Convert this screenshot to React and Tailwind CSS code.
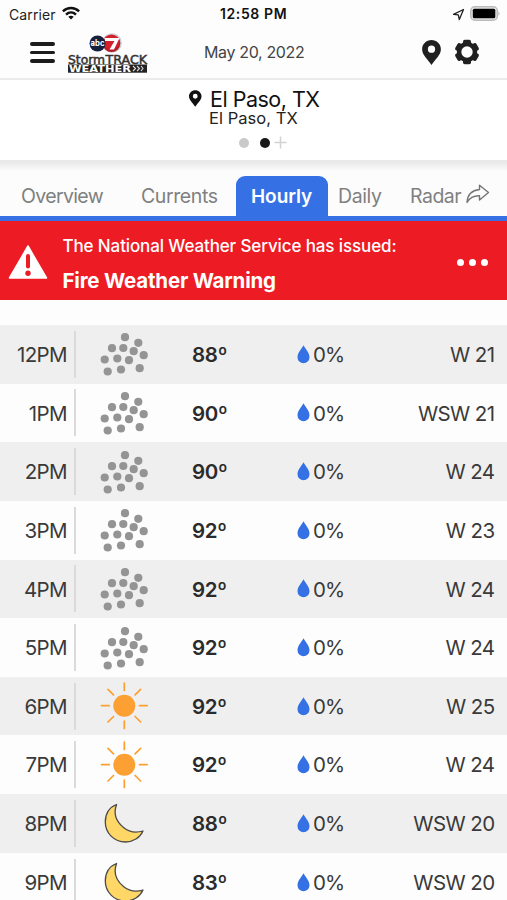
import React from "react";

const hours = [
  { time: "12PM", icon: "dust", temp: "88º", wind: "W 21" },
  { time: "1PM", icon: "dust", temp: "90º", wind: "WSW 21" },
  { time: "2PM", icon: "dust", temp: "90º", wind: "W 24" },
  { time: "3PM", icon: "dust", temp: "92º", wind: "W 23" },
  { time: "4PM", icon: "dust", temp: "92º", wind: "W 24" },
  { time: "5PM", icon: "dust", temp: "92º", wind: "W 24" },
  { time: "6PM", icon: "sun", temp: "92º", wind: "W 25" },
  { time: "7PM", icon: "sun", temp: "92º", wind: "W 24" },
  { time: "8PM", icon: "moon", temp: "88º", wind: "WSW 20" },
  { time: "9PM", icon: "moon", temp: "83º", wind: "WSW 20" },
];

const dustDots = [
  [25, 6.7], [38.3, 12.3], [12, 17.7], [23.3, 17.5], [33.7, 20.7], [43.7, 24.7],
  [4.7, 29], [17.3, 28], [29, 29.7], [7.7, 41], [21, 39], [39.7, 37.7],
];

function Dust() {
  return (
    <svg width="48" height="48" viewBox="0 -0.5 48 48" fill="#949494">
      {dustDots.map(([x, y]) => (
        <circle key={x} cx={x} cy={y} r="4.1" />
      ))}
    </svg>
  );
}

function Sun() {
  return (
    <svg width="48" height="48" viewBox="0 0 48 48" stroke="#fca034" strokeWidth="1.7" strokeLinecap="round">
      <circle cx="24.3" cy="23.7" r="11" fill="#fca034" stroke="none" />
      <path d="M24.3 1v7.5M24.3 39v7.5M1.5 23.7h7.7M39.5 23.7h7.7M8 7.4l5.5 5.5M40.6 7.4l-5.5 5.5M8 40l5.5-5.5M40.6 40l-5.5-5.5" />
    </svg>
  );
}

function Moon() {
  return (
    <svg width="48" height="48" viewBox="0 -0.5 48 48">
      <path
        d="M16.6 5C9 8 5.3 14.5 5.3 22.500C5.3 33.500 14 42.500 25.5 42.500C33 42.500 40 38.300 43 31.500C36 33.500 29.500 33 23.500 28C15.500 21.300 13.500 13 16.6 5Z"
        fill="#fed767"
        stroke="#4b4b4b"
        strokeWidth="1.3"
        strokeLinejoin="round"
      />
    </svg>
  );
}

const weatherIcons = { dust: Dust, sun: Sun, moon: Moon };

function Pin({ className }) {
  return (
    <svg className={className} viewBox="0 0 18 24" fill="currentColor">
      <path fillRule="evenodd" d="M9 0C4 0 0 3.9 0 8.8C0 14.5 5.5 18.5 9 24C12.500 18.500 18 14.500 18 8.800C18 3.900 14 0 9 0ZM9 5.300A3.500 3.500 0 1 1 9 12.300A3.500 3.500 0 0 1 9 5.300Z" />
    </svg>
  );
}

function StatusBar() {
  return (
    <div className="flex h-7 items-center text-[#222]">
      <div className="flex w-[220px] items-center pl-[9px]">
        <span className="w-[53px] whitespace-nowrap text-[14px] tracking-[0.1px]">Carrier</span>
        <svg className="-mt-0.5" width="18" height="14" viewBox="0 0 18 14" fill="none" stroke="#111" strokeWidth="2.5">
          <path d="M.9 5.300C5.500.9 12.500.9 17.100 5.300M4 8.600C6.900 5.900 11.100 5.900 14 8.600" />
          <path d="M9 13.400L6.300 10.700C7.900 9.300 10.100 9.300 11.700 10.700Z" fill="#111" stroke="none" />
        </svg>
      </div>
      <span className="-mt-0.5 w-[220px] whitespace-nowrap text-[14px] font-semibold tracking-[0.6px] text-[#111]">12:58 PM</span>
      <div className="flex items-center">
        <svg className="ml-[12px]" width="13" height="13" viewBox="0 0 13 13" fill="none" stroke="#222" strokeWidth="1.3" strokeLinejoin="round">
          <path d="M11.500 1.500L1.500 6.300L6.300 6.900L7.300 11.500Z" />
        </svg>
        <svg className="ml-[5px] -mt-[2px]" width="31" height="15" viewBox="0 0 31 15">
          <rect x=".8" y=".8" width="26.500" height="13.400" rx="4" fill="#e8e8e8" stroke="#bbb" strokeWidth="1.500" />
          <rect x="2.800" y="2.700" width="22.500" height="9.600" rx="1.500" fill="#000" />
          <path d="M28.500 5.200q2 2.300 0 4.600z" fill="#aaa" />
        </svg>
      </div>
    </div>
  );
}

function Logo() {
  return (
    <svg width="82" height="40" viewBox="0 0 82 40">
      <defs>
        <radialGradient id="globe" cx=".45" cy=".35" r=".65">
          <stop offset=".7" stopColor="#d5202b" />
          <stop offset="1" stopColor="#a5141e" />
        </radialGradient>
      </defs>
      <circle cx="45" cy="10" r="9.800" fill="#c9ccd2" />
      <circle cx="44.500" cy="10.200" r="8.800" fill="url(#globe)" />
      <path d="M37.500 5H52.500L47 16.500H42.500L47.500 8H38Z" fill="#fff" />
      <circle cx="30.500" cy="10.500" r="8" fill="#15203c" />
      <text x="30.500" y="13.300" textAnchor="middle" fill="#fff" fontSize="8.500" fontWeight="700" textLength="14" lengthAdjust="spacingAndGlyphs" fontFamily="Inter, sans-serif">abc</text>
      <text x="1" y="30.500" fontSize="12" fill="#333" stroke="#333" strokeWidth=".5" textLength="37" lengthAdjust="spacingAndGlyphs" fontFamily="DejaVu Sans, sans-serif">Storm</text>
      <text x="38.500" y="30.500" fontSize="12.500" fill="#333" stroke="#333" strokeWidth=".5" textLength="41.500" lengthAdjust="spacingAndGlyphs" fontFamily="DejaVu Sans, sans-serif">TRACK</text>
      <rect x="1" y="31.500" width="79" height="8.200" fill="#222" />
      <text x="2" y="38.700" fontSize="8.800" fontWeight="700" fill="#fff" textLength="62" lengthAdjust="spacingAndGlyphs" fontFamily="DejaVu Sans, sans-serif">WEATHER</text>
      <path d="M66 33l2.500 2.500L66 38M70 33l2.500 2.500L70 38M74 33l2 2.500L74 38" fill="none" stroke="#ddd" strokeWidth="1.100" />
    </svg>
  );
}

function Gear() {
  return (
    <svg className="ml-[13px]" width="26" height="26" viewBox="0 0 26 26">
      <g fill="#202020">
        <circle cx="13" cy="13" r="10.200" />
        <rect x="9" y=".8" width="8" height="24.400" rx="1.800" />
        <rect x="9" y=".8" width="8" height="24.400" rx="1.800" transform="rotate(60 13 13)" />
        <rect x="9" y=".8" width="8" height="24.400" rx="1.800" transform="rotate(120 13 13)" />
      </g>
      <circle cx="13" cy="13" r="5.700" fill="#fff" />
    </svg>
  );
}

function Header() {
  return (
    <header className="flex h-[52px] items-start border-b-2 border-[#ebebeb]">
      <div className="ml-[30px] mt-[14px] flex w-[25px] flex-col gap-[5.200px]">
        <i className="h-[3.500px] rounded-full bg-[#1b1b1b]" />
        <i className="h-[3.500px] rounded-full bg-[#1b1b1b]" />
        <i className="h-[3.500px] rounded-full bg-[#1b1b1b]" />
      </div>
      <div className="ml-[12px] mt-[5px] w-[137px]"><Logo /></div>
      <span className="mt-[12px] w-[218px] whitespace-nowrap text-[16px] leading-6 tracking-[-0.35px] text-[#444]">May 20, 2022</span>
      <Pin className="mt-[12px] h-[25px] w-[19px] text-[#202020]" />
      <div className="mt-[11px]"><Gear /></div>
    </header>
  );
}

function Location() {
  return (
    <section className="h-[80px] bg-white">
      <div className="flex h-[37px] items-center pl-[189px]">
        <Pin className="h-[17px] w-[12.500px] text-[#111]" />
        <h1 className="ml-[8.500px] whitespace-nowrap text-[21.500px] leading-5 tracking-[-0.5px] text-[#111]">El Paso, TX</h1>
      </div>
      <p className="-mt-[7px] whitespace-nowrap pl-[209px] text-[16.500px] leading-[17px] tracking-[0.05px] text-[#222]">El Paso, TX</p>
      <div className="mt-[9px] flex items-center pl-[239px]">
        <i className="size-[10px] rounded-full bg-[#c9c9c9]" />
        <i className="ml-[11px] size-[10px] rounded-full bg-[#181818]" />
        <svg className="ml-[4px]" width="13" height="13" viewBox="0 0 13 13" stroke="#d2d2d2" strokeWidth="1.500">
          <path d="M6.500.5v12M.5 6.500h12" />
        </svg>
      </div>
    </section>
  );
}

function Tabs() {
  return (
    <nav className="flex h-[61px] items-end whitespace-nowrap border-b-[5px] border-[#3571e5] bg-linear-to-b from-[#e9e9e9] from-[4%] to-[#fcfcfc] to-[20%] text-[19.500px] leading-[40px] text-[#808080]">
      <span className="w-[120px] pl-[21px] tracking-[-0.65px]">Overview</span>
      <span className="w-[116px] pl-[21px] tracking-[-0.4px]">Currents</span>
      <span className="h-10 w-[92px] rounded-t-[9px] bg-[#3571e5] pl-[15px] text-[19px] font-semibold leading-[41px] tracking-[-0.05px] text-white">Hourly</span>
      <span className="w-[82px] pl-[10px] tracking-[-0.4px]">Daily</span>
      <span className="w-[56px] tracking-[-0.5px]">Radar</span>
      <svg className="mb-[12px]" width="24" height="20" viewBox="0 0 24 20" fill="none" stroke="#757575" strokeWidth="1.400" strokeLinejoin="round">
        <path d="M13.500 1.200L22.500 8.500L13.500 16V11.800C7.500 11.500 4 13.500 1 18.500C1.500 11 5.500 6.200 13.500 5.500Z" />
      </svg>
    </nav>
  );
}

function Alert() {
  return (
    <section className="flex h-[79px] items-center bg-[#ed1c24] text-white">
      <svg className="ml-[8px] mt-[2px]" width="40" height="36" viewBox="0 0 40 36">
        <path d="M20 2L38.500 34H1.500Z" fill="#fff" stroke="#fff" strokeWidth="1.500" strokeLinejoin="round" />
        <path d="M20 12V22.500" stroke="#ed1c24" strokeWidth="4" strokeLinecap="round" />
        <circle cx="20" cy="29.300" r="2.700" fill="#ed1c24" />
      </svg>
      <div className="ml-[14.500px] mt-[6px] w-[394.500px] whitespace-nowrap">
        <p className="text-[17px] font-medium leading-6 tracking-[-0.12px]">The National Weather Service has issued:</p>
        <p className="mt-[11px] text-[20.500px] font-bold leading-6 tracking-[-0.2px]">Fire Weather Warning</p>
      </div>
      <div className="mt-[4px] flex gap-[5px]">
        <i className="size-[7px] rounded-full bg-white" />
        <i className="size-[7px] rounded-full bg-white" />
        <i className="size-[7px] rounded-full bg-white" />
      </div>
    </section>
  );
}

function HourRow({ hour }) {
  const Icon = weatherIcons[hour.icon];
  return (
    <li className="flex h-[58.650px] items-center whitespace-nowrap text-[20.500px] text-[#3a3a3a] odd:bg-[#efefef]">
      <span className="w-[67px] pt-[2px] text-right tracking-[-0.6px]">{hour.time}</span>
      <div className="ml-[7px] h-[47px] w-[2px] bg-[#dadada]" />
      <div className="ml-[24px] w-[92px]"><Icon /></div>
      <span className="w-[105px] pt-[2px] font-semibold tracking-[-0.3px] text-[#2b2b2b]">{hour.temp}</span>
      <svg width="13" height="19" viewBox="0 0 13 19" fill="#3571e5">
        <path d="M6.500.3C8 3.500 12.500 7.500 12.500 12.200A6 6 0 0 1 .5 12.200C.5 7.500 5 3.500 6.500.3Z" />
      </svg>
      <span className="ml-[3px] pt-[2px] tracking-[-0.9px]">0%</span>
      <span className="ml-auto mr-[12.500px] pt-[2px] tracking-[-0.6px]">{hour.wind}</span>
    </li>
  );
}

export default function App() {
  return (
    <main className="h-[900px] w-[507px] overflow-hidden bg-[#fdfdfd] font-[Inter,sans-serif]">
      <StatusBar />
      <Header />
      <Location />
      <Tabs />
      <Alert />
      <ul className="mt-[25px]">
        {hours.map((hour) => (
          <HourRow key={hour.time} hour={hour} />
        ))}
      </ul>
    </main>
  );
}
